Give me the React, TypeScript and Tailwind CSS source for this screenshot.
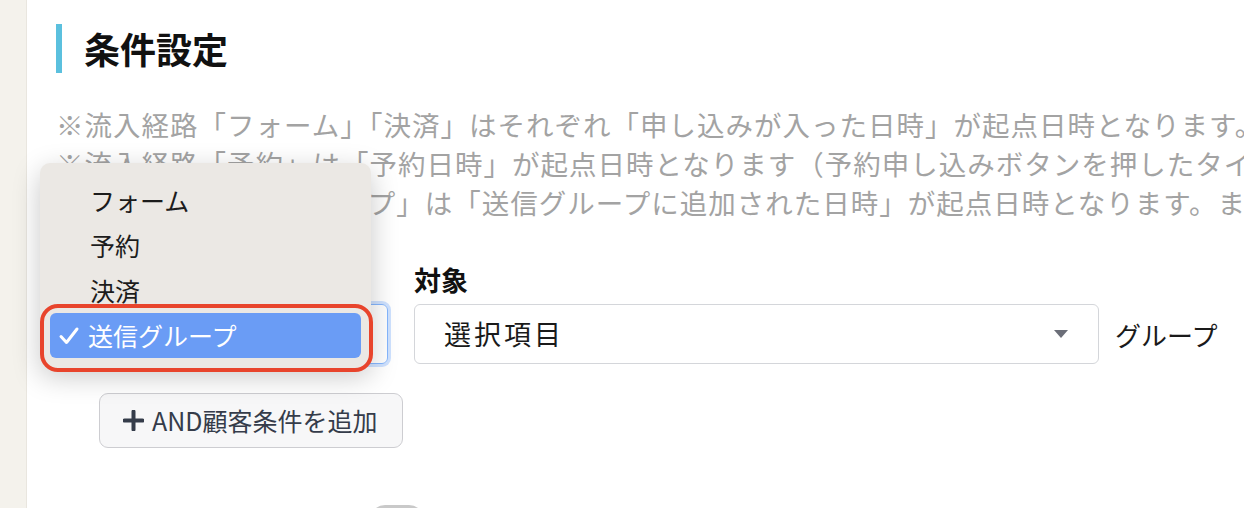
const font = { fontFamily: '"Noto Sans CJK JP", "Noto Sans", sans-serif' };

const notes = [
  '※流入経路「フォーム」「決済」はそれぞれ「申し込みが入った日時」が起点日時となります。',
  '※流入経路「予約」は「予約日時」が起点日時となります（予約申し込みボタンを押したタイミングではありません）',
  '※流入経路「送信グループ」は「送信グループに追加された日時」が起点日時となります。また、',
];

const options = ['フォーム', '予約', '決済'];

function OptionMenu() {
  return (
    <div className="absolute left-[13px] top-[163px] w-[331px] rounded-[10px] bg-[#ebe8e4] pt-[15px] pb-[10px] shadow-[0_8px_28px_rgba(0,0,0,0.22)]">
      {options.map((o) => (
        <div key={o} className="flex h-[45px] items-center pl-[50px] text-[25px] text-[#1c1c1c]">
          {o}
        </div>
      ))}
      <div className="mx-[10px] flex h-[45px] items-center rounded-[6px] bg-[#6a9cf5] pl-[8px] text-[25px] text-white">
        <svg width="22" height="22" viewBox="0 0 22 22" className="mr-[8px]">
          <path d="M3 11.5 L8.5 17.5 L19 4" fill="none" stroke="white" strokeWidth="3" strokeLinecap="round" strokeLinejoin="round" />
        </svg>
        送信グループ
      </div>
      {/* 強調用の赤枠 */}
      <div className="pointer-events-none absolute left-[0px] right-[-2px] bottom-[-4px] h-[68px] rounded-[18px] border-[4px] border-[#e8442c]" />
    </div>
  );
}

export default function App() {
  return (
    <div className="flex h-[508px] w-[1244px] overflow-hidden bg-white" style={font}>
      <div className="w-[27px] shrink-0 border-r border-[#e9e6df] bg-[#f4f2ec]" />

      <div className="relative flex-1 pl-[29px] pt-[24px]">
        <div className="flex items-center">
          <div className="h-[49px] w-[6px] bg-[#5bc0de]" />
          <h2 className="ml-[22px] text-[36px] font-bold leading-[49px] text-[#111]">条件設定</h2>
        </div>

        <div className="mt-[32px] whitespace-nowrap text-[27.5px] leading-[39px] tracking-[1px] text-[#a3a3a3]">
          {notes.map((n) => (
            <div key={n}>{n}</div>
          ))}
        </div>

        <div className="mt-[42px] flex items-end">
          <div className="w-[332px]">
            <div className="mb-[8px] text-[27px] font-bold leading-[32px] text-[#111]">流入経路</div>
            <div className="h-[60px] rounded-[6px] border border-[#86b7fe] shadow-[0_0_0_3px_rgba(13,110,253,0.2)]" />
          </div>

          <div className="ml-[26px] w-[685px]">
            <div className="mb-[8px] text-[27px] font-bold leading-[32px] text-[#111]">対象</div>
            <div className="flex h-[60px] items-center justify-between rounded-[6px] border border-[#d4d6da] pl-[29px] pr-[30px]">
              <span className="text-[27px] tracking-[3px] text-[#1a1a1a]">選択項目</span>
              <svg width="14" height="8" viewBox="0 0 14 8">
                <path d="M0 0 H14 L7 8 Z" fill="#6b6e78" />
              </svg>
            </div>
          </div>

          <div className="ml-[16px] flex h-[60px] items-center text-[26px] text-[#1a1a1a]">グループ</div>
        </div>

        <div className="ml-[43px] mt-[29px]">
          <button className="flex h-[55px] w-[304px] items-center rounded-[9px] border border-[#cdcdd1] bg-[#f7f7f8] pl-[23px] text-[25px] text-[#353c4a]">
            <svg width="21" height="21" viewBox="0 0 21 21" className="mr-[8px]">
              <path d="M10.5 1.5 V19.5 M1.5 10.5 H19.5" stroke="#353c4a" strokeWidth="4" strokeLinecap="round" />
            </svg>
            AND顧客条件を追加
          </button>
        </div>

        <div className="ml-[314px] mt-[57px] h-[30px] w-[54px] rounded-full bg-[#c9c9c9]" />

        <OptionMenu />
      </div>
    </div>
  );
}
